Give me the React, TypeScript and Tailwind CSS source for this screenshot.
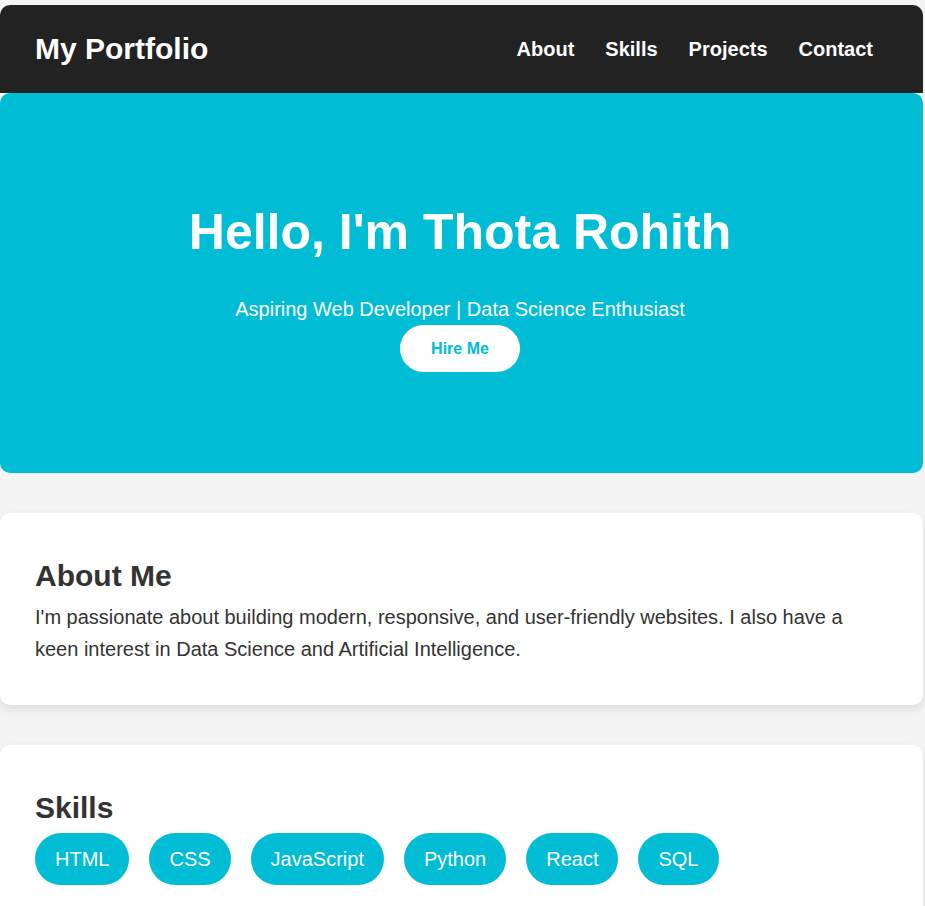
const skills = ['HTML', 'CSS', 'JavaScript', 'Python', 'React', 'SQL'];
const links = ['About', 'Skills', 'Projects', 'Contact'];

function Card({ title, children }: { title: string; children: React.ReactNode }) {
  return (
    <section className="mt-[40px] mr-[2px] rounded-[10px] bg-white px-[35px] pt-[45px] pb-[40px] shadow-[0_4px_10px_rgba(0,0,0,0.1)]">
      <h2 className="mb-[8px] text-[30px] font-bold leading-[35px] text-[#333]">{title}</h2>
      {children}
    </section>
  );
}

export default function App() {
  return (
    <div className="min-h-screen bg-[#f4f4f4] pt-[5px] font-['Liberation_Sans',Arial,sans-serif] text-[#333]">
      {/* Header */}
      <header className="mr-[2px] flex h-[88px] items-center justify-between rounded-t-[10px] bg-[#222] pl-[35px] pr-[50px] text-white">
        <h1 className="text-[30px] font-bold leading-none">My Portfolio</h1>
        <nav className="flex gap-[31px]">
          {links.map(l => (
            <a key={l} href="#" className="text-[20px] font-bold text-white">
              {l}
            </a>
          ))}
        </nav>
      </header>

      {/* Hero */}
      <section className="mr-[2px] flex flex-col items-center rounded-[10px] bg-[#00bcd4] pt-[111px] pr-[3px] pb-[101px] text-center text-white">
        <h1 className="text-[50px] font-bold leading-[57px]">Hello, I'm Thota Rohith</h1>
        <p className="mt-[37px] text-[20px] leading-[23px]">Aspiring Web Developer | Data Science Enthusiast</p>
        <button className="mt-[4px] rounded-full bg-white px-[31px] py-[15px] text-[16px] font-bold leading-[17px] text-[#00bcd4]">
          Hire Me
        </button>
      </section>

      <Card title="About Me">
        <p className="text-[20px] leading-[32px]">
          I'm passionate about building modern, responsive, and user-friendly websites. I also have a keen interest in Data Science and Artificial Intelligence.
        </p>
      </Card>

      <Card title="Skills">
        <div className="flex flex-wrap gap-[20px]">
          {skills.map(s => (
            <span key={s} className="rounded-full bg-[#00bcd4] px-[20px] py-[14px] text-[20px] leading-[24px] text-white">
              {s}
            </span>
          ))}
        </div>
      </Card>
    </div>
  );
}
